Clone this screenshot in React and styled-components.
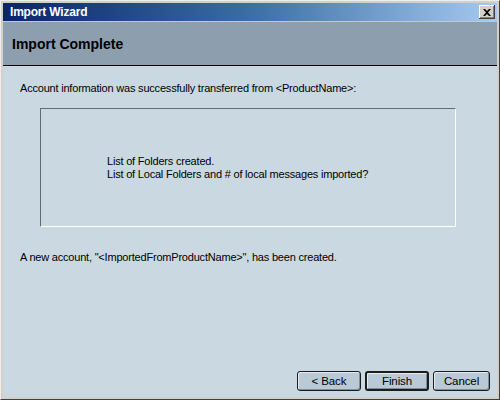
import React from 'react'
import styled, { createGlobalStyle } from 'styled-components'

const GlobalStyle = createGlobalStyle`
    html, body {
        margin: 0;
        padding: 0;
        width: 500px;
        height: 400px;
        overflow: hidden;
        background: #d4d0c8;
    }
    * {
        box-sizing: border-box;
    }
`

export default function App() {
    return (
        <>
            <GlobalStyle />
            <Window>
                <TitleBar>
                    <Title>Import Wizard</Title>
                    <CloseButton aria-label='Close'>
                        <svg width='8' height='7' viewBox='0 0 8 7'>
                            <path d='M0 0h2l2 2 2-2h2L5 3.5 8 7H6L4 5 2 7H0l3-3.5z' fill='#000' />
                        </svg>
                    </CloseButton>
                </TitleBar>
                <Header>
                    <HeaderTitle>Import Complete</HeaderTitle>
                </Header>
                <Body>
                    <Paragraph>Account information was successfully transferred from &lt;ProductName&gt;:</Paragraph>
                    <SummaryBox>
                        <SummaryLine>List of Folders created.</SummaryLine>
                        <SummaryLine>List of Local Folders and # of local messages imported?</SummaryLine>
                    </SummaryBox>
                    <Paragraph>A new account, "&lt;ImportedFromProductName&gt;", has been created.</Paragraph>
                </Body>
                <Footer>
                    <Button $width={64}>&lt; Back</Button>
                    <Button $width={64} $default>Finish</Button>
                    <Button $width={57}>Cancel</Button>
                </Footer>
            </Window>
        </>
    )
}

const Window = styled.div`
    width: 500px;
    height: 400px;
    display: flex;
    flex-direction: column;
    background: #cad9e1;
    border: 3px solid #d4d0c8;
    font-family: "Liberation Sans", Arial, sans-serif;
    font-size: 11px;
    letter-spacing: -0.2px;
    color: #000;
    position: relative;
    &::after {
        content: '';
        position: absolute;
        inset: -3px;
        border-right: 1px solid #404040;
        border-bottom: 1px solid #404040;
        border-top: 1px solid #eeeeee;
        border-left: 1px solid #eeeeee;
        pointer-events: none;
    }
`

const TitleBar = styled.div`
    height: 18px;
    flex: none;
    display: flex;
    align-items: center;
    justify-content: space-between;
    padding: 0 2px 0 7px;
    background: linear-gradient(to right, #0a246a 0%, #3a6ea5 50%, #a6caf0 100%);
`

const Title = styled.span`
    color: #fff;
    font-weight: bold;
    font-size: 12px;
    letter-spacing: -0.2px;
`

const CloseButton = styled.button`
    width: 16px;
    height: 14px;
    padding: 0;
    display: flex;
    align-items: center;
    justify-content: center;
    background: #d4d0c8;
    border: none;
    box-shadow: inset -1px -1px 0 #404040, inset 1px 1px 0 #ffffff, inset -2px -2px 0 #808080;
`

const Header = styled.div`
    height: 45px;
    flex: none;
    display: flex;
    align-items: center;
    padding: 0 9px;
    background: #8d9eae;
    border-top: 1px solid #c0c8d0;
    border-bottom: 1px solid #000;
`

const HeaderTitle = styled.h1`
    margin: 0;
    font-size: 14px;
    font-weight: bold;
    letter-spacing: 0;
`

const Body = styled.div`
    flex: 1;
    display: flex;
    flex-direction: column;
    padding: 15px 17px 0;
`

const Paragraph = styled.p`
    margin: 0;
    line-height: 14px;
`

const SummaryBox = styled.div`
    margin: 13px 0 23px 20px;
    width: 416px;
    height: 119px;
    display: flex;
    flex-direction: column;
    justify-content: center;
    padding-left: 66px;
    border-top: 1px solid #5e6d79;
    border-left: 1px solid #5e6d79;
    border-right: 1px solid #ffffff;
    border-bottom: 1px solid #ffffff;
`

const SummaryLine = styled.div`
    line-height: 13px;
`

const Footer = styled.div`
    flex: none;
    display: flex;
    justify-content: flex-end;
    gap: 4px;
    padding: 0 7px 6px 0;
`

const Button = styled.button`
    width: ${p => p.$width}px;
    height: 20px;
    padding: 0;
    font-family: inherit;
    font-size: 11.5px;
    letter-spacing: -0.1px;
    color: #000;
    background: #b9c9d6;
    border: ${p => p.$default ? '2px' : '1px'} solid #1c1c1c;
    border-radius: 3px;
    box-shadow: inset 1px 1px 0 #e4ecf2, inset -1px -1px 0 #7e8e9c;
`
